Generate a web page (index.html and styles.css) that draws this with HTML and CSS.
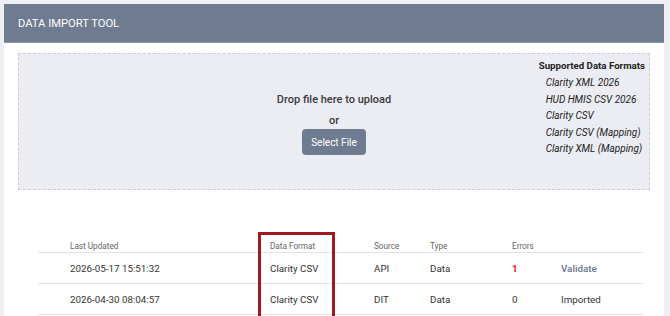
FILE: index.html
```html
<!DOCTYPE html>
<html lang="en">
<head>
  <meta charset="UTF-8" />
  <meta name="viewport" content="width=device-width, initial-scale=1.0"/>
  <title>Data Import Tool</title>
  <link rel="stylesheet" href="styles.css">
</head>
<body>
  <div class="card">
    <div class="card-header">Data Import Tool</div>

    <div class="card-body">
      <!-- upload area -->
      <div class="dropzone">
        <div></div>
        <div class="drop-center">
          <div class="drop-text">Drop file here to upload</div>
          <div class="drop-or">or</div>
          <button class="btn">Select File</button>
        </div>
        <div class="formats">
          <div class="formats-title">Supported Data Formats</div>
          <ul>
            <li>Clarity XML 2026</li>
            <li>HUD HMIS CSV 2026</li>
            <li>Clarity CSV</li>
            <li>Clarity CSV (Mapping)</li>
            <li>Clarity XML (Mapping)</li>
          </ul>
        </div>
      </div>

      <!-- import history -->
      <div class="history">
        <div class="row head">
          <div>Last Updated</div>
          <div>Data Format</div>
          <div>Source</div>
          <div>Type</div>
          <div>Errors</div>
          <div></div>
        </div>
        <div class="row">
          <div>2026-05-17 15:51:32</div>
          <div>Clarity CSV</div>
          <div>API</div>
          <div>Data</div>
          <div class="err">1</div>
          <div><a href="#" class="link">Validate</a></div>
        </div>
        <div class="row">
          <div>2026-04-30 08:04:57</div>
          <div>Clarity CSV</div>
          <div>DIT</div>
          <div>Data</div>
          <div>0</div>
          <div>Imported</div>
        </div>
        <div class="highlight"></div>
      </div>
    </div>
  </div>
</body>
</html>
```

FILE: styles.css
```css
body {
  margin: 0;
  padding: 4px 6px 0 4px;
  background: #eeeef3;
  font-family: Roboto, "Liberation Sans", sans-serif;
  color: #333;
}
.card {
  background: #fff;
  min-height: 400px;
}
.card-header {
  height: 39px;
  padding: 13px 0 0 14px;
  background: #6e7b91;
  color: #fff;
  font-size: 11.2px;
  line-height: 14px;
  text-transform: uppercase;
  border-bottom: 1px solid #8c97aa;
  box-sizing: border-box;
}
.card-body {
  padding: 10px 14px 0 14px;
}
.dropzone {
  display: grid;
  grid-template-columns: 1fr auto 1fr;
  height: 137px;
  box-sizing: border-box;
  background: #ecedf2;
  border: 1px dashed #cfd0d6;
}
.drop-center {
  text-align: center;
  padding-top: 39px;
}
.drop-text {
  font-size: 11px;
  font-weight: 500;
  color: #3a3a3a;
}
.drop-or {
  font-size: 11px;
  font-weight: 500;
  color: #3a3a3a;
  margin-top: 8px;
}
.btn {
  display: block;
  margin: 2px auto 0 auto;
  height: 26px;
  padding: 0 9px;
  background: #6e7b91;
  color: #fff;
  border: none;
  border-radius: 4px;
  font-family: inherit;
  font-size: 10px;
}
.formats {
  justify-self: end;
  padding: 6px 4px 0 0;
  font-size: 10px;
  color: #222;
}
.formats-title {
  font-size: 9.7px;
  font-weight: 700;
}
.formats ul {
  list-style: none;
  margin: 4px 0 0 0;
  padding: 0 0 0 7px;
}
.formats li {
  font-style: italic;
  line-height: 16.5px;
}
.history {
  position: relative;
  margin: 48px 7px 0 20px;
}
.row {
  display: grid;
  grid-template-columns: 200px 104px 56px 82px 49px 1fr;
  padding-left: 32px;
  height: 30px;
  align-items: center;
  border-bottom: 1px solid #e4e4e8;
  font-size: 9.8px;
  color: #333;
}
.row.head {
  height: 11px;
  padding-top: 3px;
  align-items: start;
  font-size: 8.2px;
  color: #666;
}
.err {
  color: #e0161c;
  font-weight: 700;
}
.link {
  color: #66748c;
  font-weight: 500;
  text-decoration: none;
}
/* annotation box around the Data Format column */
.highlight {
  position: absolute;
  left: 220px;
  top: -6px;
  width: 71px;
  height: 100px;
  border: 3px solid #9e1a20;
}
```
